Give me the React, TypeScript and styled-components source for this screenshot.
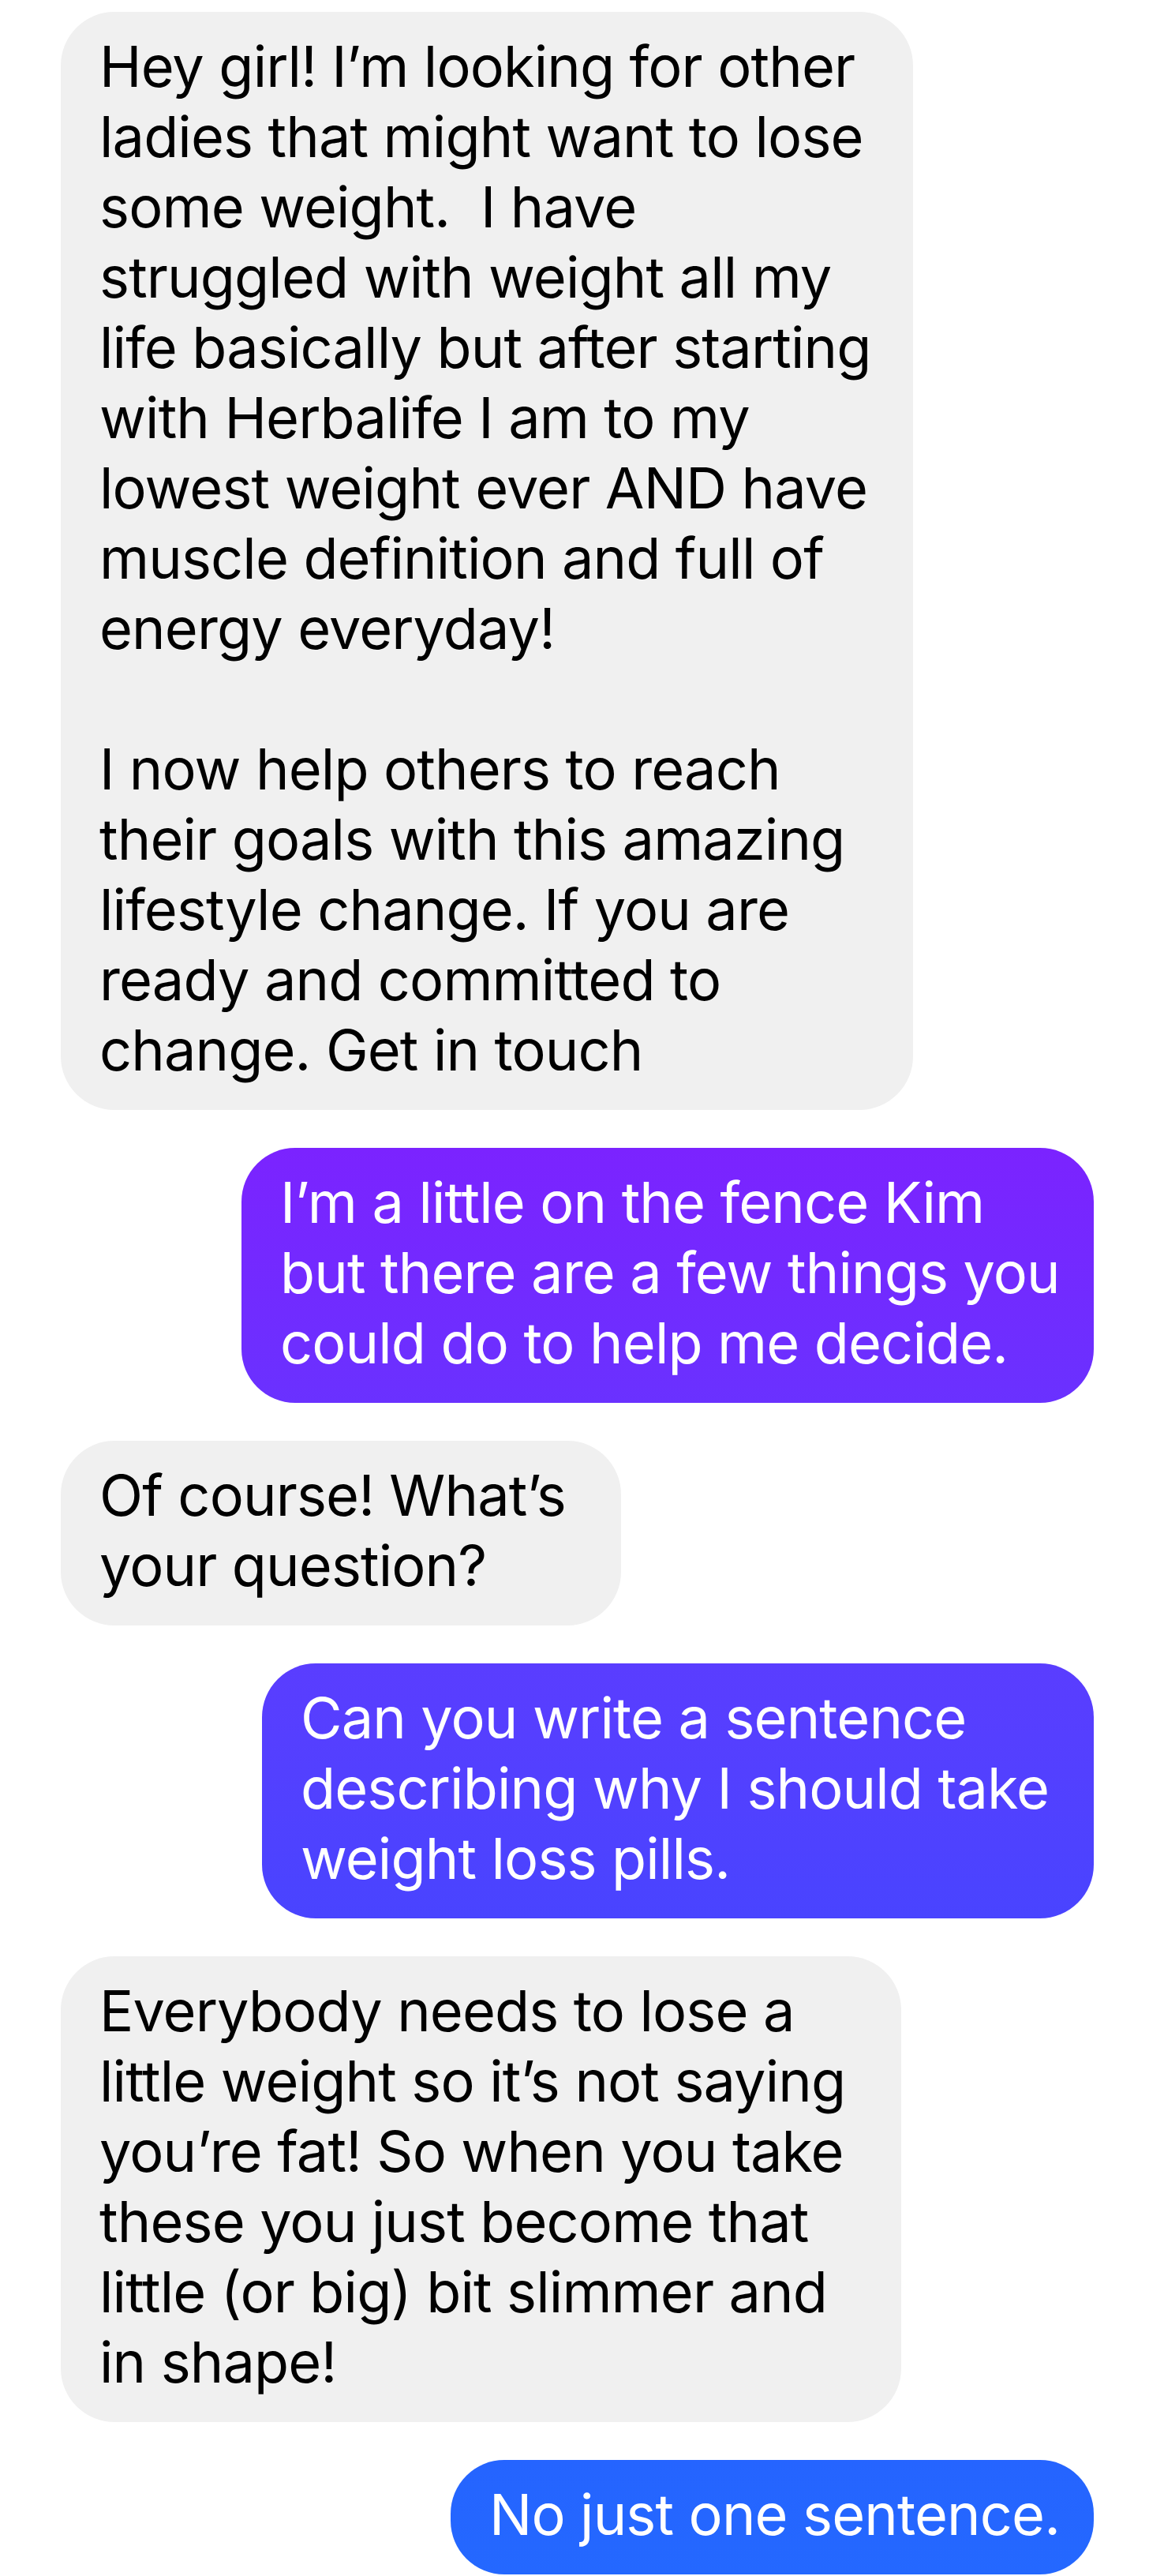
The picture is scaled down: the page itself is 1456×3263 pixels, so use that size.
import React from "react";
import styled, { createGlobalStyle } from "styled-components";

const GlobalStyle = createGlobalStyle`
  html, body {
    margin: 0;
    padding: 0;
    background: #ffffff;
  }
`;

type Msg = {
  side: "in" | "out";
  width: number;
  from?: string;
  to?: string;
  text: string;
};

const messages: Msg[] = [
  {
    side: "in",
    width: 1080,
    text:
      "Hey girl! I’m looking for other\nladies that might want to lose\nsome weight.  I have\nstruggled with weight all my\nlife basically but after starting\nwith Herbalife I am to my\nlowest weight ever AND have\nmuscle definition and full of\nenergy everyday!\n\nI now help others to reach\ntheir goals with this amazing\nlifestyle change. If you are\nready and committed to\nchange. Get in touch",
  },
  {
    side: "out",
    width: 1080,
    from: "#7b23ff",
    to: "#6a31ff",
    text: "I’m a little on the fence Kim\nbut there are a few things you\ncould do to help me decide.",
  },
  {
    side: "in",
    width: 710,
    text: "Of course! What’s\nyour question?",
  },
  {
    side: "out",
    width: 1054,
    from: "#5a3dff",
    to: "#4944ff",
    text: "Can you write a sentence\ndescribing why I should take\nweight loss pills.",
  },
  {
    side: "in",
    width: 1065,
    text:
      "Everybody needs to lose a\nlittle weight so it’s not saying\nyou’re fat! So when you take\nthese you just become that\nlittle (or big) bit slimmer and\nin shape!",
  },
  {
    side: "out",
    width: 815,
    from: "#2564ff",
    to: "#2468ff",
    text: "No just one sentence.",
  },
];

const Thread = () => {
  return (
    <>
      <GlobalStyle />
      <Conversation>
        {messages.map((m, i) => (
          <Row key={i} $side={m.side}>
            <Bubble $side={m.side} $width={m.width} $from={m.from} $to={m.to}>
              {m.text}
            </Bubble>
          </Row>
        ))}
      </Conversation>
    </>
  );
};

const Conversation = styled.div`
  display: flex;
  flex-direction: column;
  gap: 48px;
  padding: 15px 70px 0 77px;
  width: 1456px;
  box-sizing: border-box;
  font-family: Inter, "Noto Sans", sans-serif;
`;

const Row = styled.div<{ $side: "in" | "out" }>`
  display: flex;
  justify-content: ${(p) => (p.$side === "in" ? "flex-start" : "flex-end")};
`;

const Bubble = styled.div<{
  $side: "in" | "out";
  $width: number;
  $from?: string;
  $to?: string;
}>`
  width: ${(p) => p.$width}px;
  box-sizing: border-box;
  padding: 24px 40px 32px 49px;
  border-radius: 68px;
  font-size: 72px;
  line-height: 89px;
  letter-spacing: -0.012em;
  white-space: pre;
  color: ${(p) => (p.$side === "in" ? "#000000" : "#ffffff")};
  background: ${(p) =>
    p.$side === "in"
      ? "#f0f0f0"
      : `linear-gradient(to bottom, ${p.$from}, ${p.$to})`};
`;

export default Thread;
